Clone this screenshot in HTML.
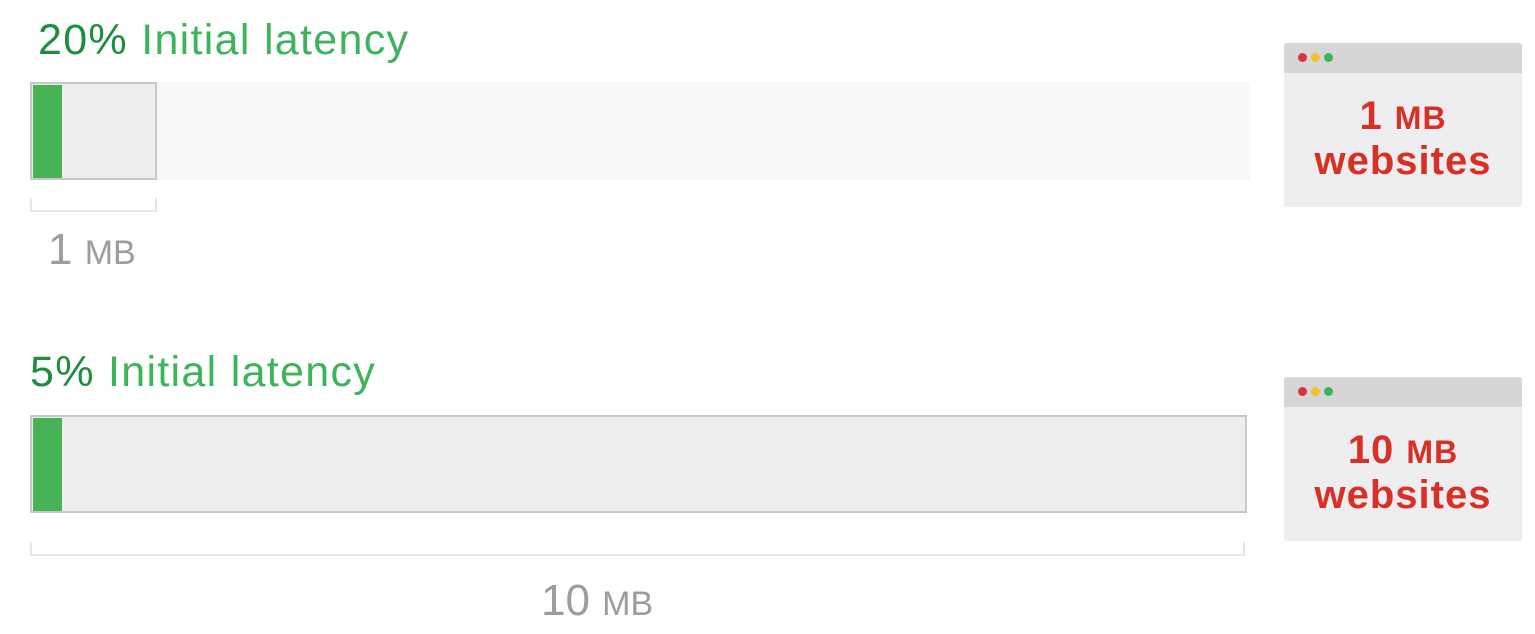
<!DOCTYPE html>
<html><head><style>
body{margin:0;width:1535px;height:634px;background:#fff;position:relative;overflow:hidden;font-family:"Liberation Sans",sans-serif}
.a{position:absolute}
.t{font-size:43px;white-space:nowrap;line-height:1;letter-spacing:1.3px}
.p{color:#1e8e3e}.l{color:#3cb55a}
.mb{color:#9c9ca2;font-size:44px;line-height:1;white-space:nowrap}
.mb small{font-size:34px}
.br{border:2px solid #e6e6e8;border-top:none;height:12px}
.box{background:#eeeef0;border-radius:3px}
.hd{background:#d6d6d8;height:30px;border-radius:3px 3px 0 0;position:relative}
.d{position:absolute;top:10px;width:9px;height:9px;border-radius:50%}
.w{color:#d93025;font-size:40px;font-weight:bold;text-align:center;line-height:43px;letter-spacing:1px}
.w small{font-size:32px}
</style></head><body>
<div class="a t" style="left:38px;top:19px"><span class="p">20%</span> <span class="l">Initial latency</span></div>
<div class="a" style="left:30px;top:82px;width:1220px;height:98px;background:#f7f7f9"></div>
<div class="a" style="left:30px;top:82px;width:123px;height:94px;border:2px solid #c8c8ca;background:#ededef"></div>
<div class="a" style="left:33px;top:85px;width:29px;height:93px;background:#46b354"></div>
<div class="a br" style="left:30px;top:198px;width:123px"></div>
<div class="a mb" style="left:48px;top:228px">1 <small>MB</small></div>

<div class="a t" style="left:30px;top:351px"><span class="p">5%</span> <span class="l">Initial latency</span></div>
<div class="a" style="left:30px;top:415px;width:1213px;height:94px;border:2px solid #c8c8ca;background:#ededef"></div>
<div class="a" style="left:33px;top:418px;width:29px;height:93px;background:#46b354"></div>
<div class="a br" style="left:30px;top:542px;width:1211px"></div>
<div class="a mb" style="left:541px;top:579px">10 <small>MB</small></div>

<div class="a box" style="left:1284px;top:43px;width:238px;height:164px">
<div class="hd"><div class="d" style="left:14px;background:#d33"></div><div class="d" style="left:27px;background:#f2c12e"></div><div class="d" style="left:40px;background:#3cb55a"></div></div>
<div class="w" style="margin-top:22px">1 <small>MB</small><br>websites</div></div>
<div class="a box" style="left:1284px;top:377px;width:238px;height:164px">
<div class="hd"><div class="d" style="left:14px;background:#d33"></div><div class="d" style="left:27px;background:#f2c12e"></div><div class="d" style="left:40px;background:#3cb55a"></div></div>
<div class="w" style="margin-top:22px">10 <small>MB</small><br>websites</div></div>
</body></html>
